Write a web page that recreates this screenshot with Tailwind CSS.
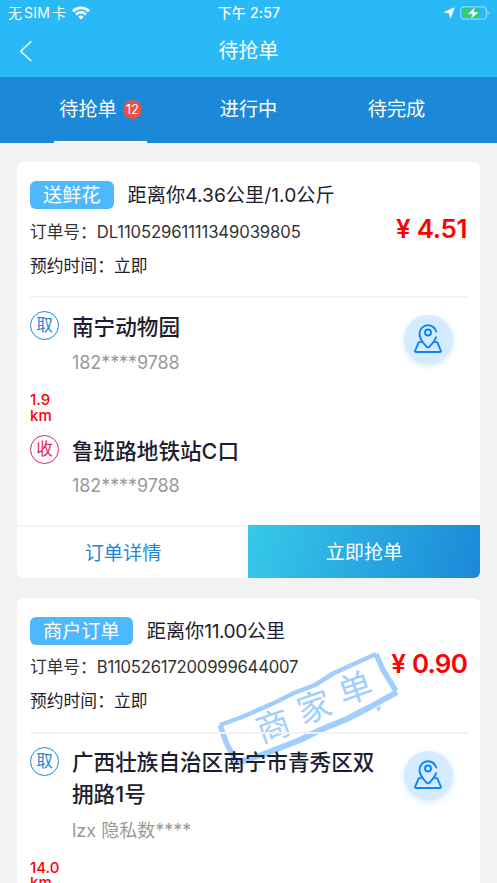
<!DOCTYPE html>
<html lang="zh-CN">
<head>
<meta charset="utf-8">
<title>待抢单</title>
<script src="https://cdn.jsdelivr.net/npm/@tailwindcss/browser@4"></script>
</head>
<body class="h-[883px] w-[497px] overflow-hidden bg-[#f2f2f2] font-['Inter','Noto_Sans_CJK_SC',sans-serif] text-[#1d1d2f]">
<header class="h-[77px] bg-[#29b9f7] text-white">
  <div class="grid h-[26px] grid-cols-3 items-center pl-[8px] pr-[7px] text-[14px]">
    <div class="flex items-center whitespace-nowrap leading-[26px]"><span>无</span><span class="mx-[2px] tracking-[0.2px]">SIM</span><span>卡</span>
      <svg class="ml-[6px] h-[14px] w-[18px]" viewBox="0 0 18 14" fill="none" stroke="white" stroke-width="2.800"><path d="M1 5.200C5.500.8 12.500.8 17 5.200"/><path d="M4 8.400C6.900 5.700 11.100 5.700 14 8.400"/><path d="M6.300 10.700Q9 8.500 11.700 10.700L9 13.400Z" fill="white" stroke="none"/></svg>
    </div>
    <div class="text-center font-medium leading-[26px] tracking-[0.2px] whitespace-nowrap">下午 2:57</div>
    <div class="flex items-center justify-end gap-[5px]">
      <svg class="h-[12px] w-[12px]" viewBox="0 0 12 12" fill="white"><path d="M11.800.3 7.500 11.800 6 6.500.3 5.200Z"/></svg>
      <svg class="h-[14px] w-[30px]" viewBox="0 0 30 14"><rect x=".7" y=".8" width="25.600" height="12.400" rx="3.500" fill="none" stroke="#8adbfa" stroke-width="1.200"/><rect x="2.500" y="2.600" width="17.500" height="8.800" rx="1.800" fill="#30d158"/><path d="M27.500 5v4q1.500-.6 1.500-2t-1.500-2Z" fill="#8adbfa"/><path d="M15.500.5 7.300 8.200h4.900L10.200 13.800 19 5.900h-5Z" fill="white" stroke="#29b9f7" stroke-width=".7"/></svg>
    </div>
  </div>
  <div class="grid h-[50px] grid-cols-[60px_1fr_60px] items-center">
    <svg class="ml-[19px] h-[22px] w-[14px]" viewBox="0 0 14 22" fill="none" stroke="white" stroke-width="1.500"><path d="M12.300 1.200 1.700 11.200 12.300 21"/></svg>
    <h1 class="text-center text-[20px] leading-[50px] font-normal">待抢单</h1>
  </div>
</header>
<nav class="flex h-[66px] justify-center bg-[#1b88d8] text-[19.200px] text-white">
  <div class="flex w-[148px] flex-col items-center">
    <div class="flex h-[63.500px] items-center gap-[6px] pt-[1.500px]"><span>待抢单</span><span class="flex h-[19px] w-[19px] items-center justify-center rounded-full bg-[#e94f46] text-[13px] tracking-[-0.2px]">12</span></div>
    <div class="h-[2.500px] w-[93px] shrink-0 bg-white"></div>
  </div>
  <div class="w-[148px] text-center leading-[65px]">进行中</div>
  <div class="w-[148px] text-center leading-[65px]">待完成</div>
</nav>
<main class="flex flex-col gap-[19.500px] px-[17px] pt-[19px]">
  <article class="flex h-[416px] shrink-0 flex-col overflow-hidden rounded-[6px] bg-white">
    <div class="mx-[13px] flex h-[136px] shrink-0 justify-between border-b-2 border-[#f2f2f2] pt-[19px]">
      <div class="whitespace-nowrap">
        <div class="flex h-[28px] items-center text-[19.200px] leading-[28px]"><span class="mr-[14px] h-[28px] rounded-[6px] bg-[#4db8fd] px-[13px] leading-[29px] text-white">送鲜花</span><span class="leading-[30px]">距离你<span class="tracking-[0.05px]">4.36</span>公里<span class="tracking-[0.05px]">/1.0</span>公斤</span></div>
        <div class="mt-[9px] h-[28px] text-[16.700px] leading-[28px] text-[#333]">订单号：<span class="tracking-[-0.120px]">DL11052961111349039805</span></div>
        <div class="mt-[6px] h-[28px] text-[16.800px] leading-[28px]">预约时间：立即</div>
      </div>
      <div class="flex items-baseline gap-[6px] pt-[29px] text-[26px] leading-[38px] font-semibold text-[#f00]"><span>¥</span><span class="tracking-[-0.400px]">4.51</span></div>
    </div>
    <div class="flex grow flex-col px-[13px] pt-[12px]">
      <section class="flex h-[80px]">
        <span class="mt-px flex h-[29px] w-[29px] shrink-0 items-center justify-center rounded-full border-[1.400px] border-[#1b88d8] text-[16.600px] text-[#1b88d8]">取</span>
        <div class="ml-[13px] grow"><h2 class="pt-px text-[21.600px] leading-[33px] font-medium">南宁动物园</h2><p class="mt-[3px] text-[18px] leading-[31px] tracking-[-0.080px] text-[#999]">182****9788</p></div>
        <span class="mr-[14px] mt-[5px] flex h-[49px] w-[49px] items-center justify-center rounded-full bg-[#d5ebff] pr-[1px] pb-[3px] shadow-[0_2px_6px_#d5ebff]"><svg class="h-[30px] w-[28px]" viewBox="0 0 28 30" fill="none" stroke="#0884ff" stroke-width="1.900" stroke-linecap="round" stroke-linejoin="round"><path d="M22.300 8.500C20.800 4.500 17.700 2.200 14 2.200A8.500 8.500 0 0 0 5.500 11C5.500 16.200 9.300 20 12.200 23.300Q14 25.300 15.800 23.300C18.500 20.300 21.200 17.500 22 14.200"/><circle cx="14" cy="9.500" r="3"/><path d="M7.300 19.100H4.800L1.200 27.500Q.7 29 2.300 29H25.700Q27.300 29 26.800 27.500L23.200 19.100H20.900"/></svg></span>
      </section>
      <p class="h-[44px] w-[29px] pt-[2px] text-[15px] leading-[15.500px] font-medium text-[#f00]"><span class="block">1.9</span><span class="block">km</span></p>
      <section class="flex">
        <span class="mt-px flex h-[29px] w-[29px] shrink-0 items-center justify-center rounded-full border-[1.400px] border-[#dd2459] text-[16.600px] text-[#dd2459]">收</span>
        <div class="ml-[13px]"><h2 class="pt-px text-[21.600px] leading-[33px] font-medium">鲁班路地铁站C口</h2><p class="mt-[2px] text-[18px] leading-[31px] tracking-[-0.080px] text-[#999]">182****9788</p></div>
      </section>
    </div>
    <footer class="grid h-[53px] shrink-0 grid-cols-[231px_232px] text-center text-[19.200px] leading-[53px]"><button class="border-t-2 border-[#f2f2f2] pr-[19px] leading-[51px] text-[#1b88d8]">订单详情</button><button class="bg-linear-[105deg,#36c9e9,#1b88d8] pt-px text-white">立即抢单</button></footer>
  </article>
  <article class="relative flex h-[416px] shrink-0 flex-col overflow-hidden rounded-[6px] bg-white">
    <svg class="absolute left-[195px] top-[48px] h-[126px] w-[195px]" viewBox="0 0 195 126"><g fill="none" stroke="#a0ceff" stroke-linejoin="round"><path d="M8 79 30 71 62 57 82 47 103 39 122 27 164 8" stroke-width="4.500"/><path d="M8 79 14 96 25 118" stroke-width="5.500"/><path d="M164 8 171 24 184 45" stroke-width="5.500"/><path d="M25 117 52 108 88 94 108 84 135 73 160 60 185 46" stroke-width="6"/></g><path d="m164 62 5-2-2 6Z" fill="#a0ceff"/><g fill="#a0ceff" font-family="Noto Sans CJK SC" font-size="34" text-anchor="middle"><text transform="translate(61 80) rotate(-19)" y="12.500">商</text><text transform="translate(102 61) rotate(-19)" y="12.500">家</text><text transform="translate(143 42) rotate(-19)" y="12.500">单</text></g></svg>
    <div class="relative mx-[13px] flex h-[136px] shrink-0 justify-between border-b-2 border-[#f2f2f2] pt-[19px]">
      <div class="whitespace-nowrap">
        <div class="flex h-[28px] items-center text-[19.200px] leading-[28px]"><span class="mr-[14px] h-[28px] rounded-[6px] bg-[#4db8fd] px-[13px] text-white">商户订单</span><span>距离你<span class="tracking-[-0.450px]">11.00</span>公里</span></div>
        <div class="mt-[8px] h-[28px] text-[16.700px] leading-[28px] text-[#333]">订单号：<span class="tracking-[-0.230px]">B11052617200999644007</span></div>
        <div class="mt-[6px] h-[28px] text-[16.800px] leading-[28px]">预约时间：立即</div>
      </div>
      <div class="flex items-baseline gap-[6px] pt-[28px] text-[26px] leading-[38px] font-semibold text-[#f00]"><span>¥</span><span class="tracking-[-0.800px]">0.90</span></div>
    </div>
    <div class="relative flex grow flex-col px-[13px] pt-[12px]">
      <section class="flex h-[113px] shrink-0">
        <span class="mt-px flex h-[29px] w-[29px] shrink-0 items-center justify-center rounded-full border-[1.400px] border-[#1b88d8] text-[16.600px] text-[#1b88d8]">取</span>
        <div class="ml-[13px] w-[318px]"><h2 class="text-[21.600px] leading-[32.500px] font-medium">广西壮族自治区南宁市青秀区双<br>拥路1号</h2><p class="mt-[4px] text-[18px] leading-[31px] text-[#999]">lzx 隐私数****</p></div>
        <span class="ml-auto mr-[14px] mt-[5px] flex h-[49px] w-[49px] shrink-0 items-center justify-center rounded-full bg-[#d5ebff] pr-[1px] pb-[3px] shadow-[0_2px_6px_#d5ebff]"><svg class="h-[30px] w-[28px]" viewBox="0 0 28 30" fill="none" stroke="#0884ff" stroke-width="1.900" stroke-linecap="round" stroke-linejoin="round"><path d="M22.300 8.500C20.800 4.500 17.700 2.200 14 2.200A8.500 8.500 0 0 0 5.500 11C5.500 16.200 9.300 20 12.200 23.300Q14 25.300 15.800 23.300C18.500 20.300 21.200 17.500 22 14.200"/><circle cx="14" cy="9.500" r="3"/><path d="M7.300 19.100H4.800L1.200 27.500Q.7 29 2.300 29H25.700Q27.300 29 26.800 27.500L23.200 19.100H20.900"/></svg></span>
      </section>
      <p class="w-[32px] pt-px text-[15px] leading-[15.500px] font-medium text-[#f00]"><span class="block">14.0</span><span class="block">km</span></p>
    </div>
  </article>
</main>
</body>
</html>
